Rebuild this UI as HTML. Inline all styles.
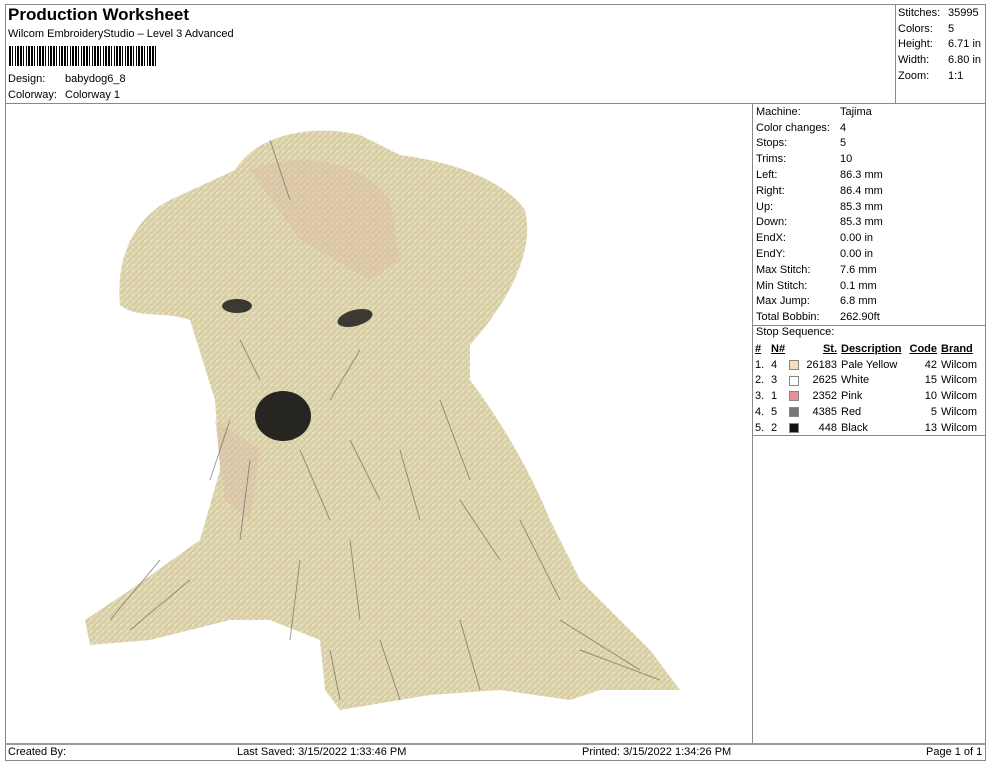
<!DOCTYPE html>
<html><head><meta charset="utf-8"><style>
*{margin:0;padding:0;box-sizing:border-box}
body{width:990px;height:762px;background:#fff;font-family:"Liberation Sans",Arial,sans-serif;color:#000;position:relative;overflow:hidden;font-size:11px}
.a{position:absolute}
.ln{position:absolute;background:#888}
td{font-size:11px;padding:0;white-space:nowrap;height:15.8px}
</style></head><body>
<div class="a" style="left:5px;top:4px;width:981px;height:757px;border:1px solid #888"></div>
<div class="ln" style="left:5px;top:103px;width:981px;height:1px"></div>
<div class="ln" style="left:895px;top:4px;width:1px;height:100px"></div>
<div class="ln" style="left:752px;top:103px;width:1px;height:641px"></div>
<div class="ln" style="left:5px;top:743px;width:981px;height:2px;background:#999"></div>
<div class="a" style="left:8px;top:5px;font-size:17px;font-weight:bold">Production Worksheet</div>
<div class="a" style="left:8px;top:28px">Wilcom EmbroideryStudio – Level 3 Advanced</div>
<div class="a" style="left:9px;top:46px;width:148px;height:20px;background:repeating-linear-gradient(90deg,#000 0 2px,#fff 2px 3px,#000 3px 4px,#fff 4px 6px,#000 6px 7px,#fff 7px 8px,#000 8px 10px,#fff 10px 11px)"></div>
<div class="a" style="left:8px;top:73px">Design:</div><div class="a" style="left:65px;top:73px">babydog6_8</div>
<div class="a" style="left:8px;top:89px">Colorway:</div><div class="a" style="left:65px;top:89px">Colorway 1</div>
<table class="a" style="left:898px;top:5px;border-collapse:collapse">
<tr><td style="width:50px">Stitches:</td><td>35995</td></tr>
<tr><td>Colors:</td><td>5</td></tr>
<tr><td>Height:</td><td>6.71 in</td></tr>
<tr><td>Width:</td><td>6.80 in</td></tr>
<tr><td>Zoom:</td><td>1:1</td></tr></table>
<table class="a" style="left:756px;top:104px;border-collapse:collapse">
<tr><td style="width:84px">Machine:</td><td>Tajima</td></tr>
<tr><td>Color changes:</td><td>4</td></tr>
<tr><td>Stops:</td><td>5</td></tr>
<tr><td>Trims:</td><td>10</td></tr>
<tr><td>Left:</td><td>86.3 mm</td></tr>
<tr><td>Right:</td><td>86.4 mm</td></tr>
<tr><td>Up:</td><td>85.3 mm</td></tr>
<tr><td>Down:</td><td>85.3 mm</td></tr>
<tr><td>EndX:</td><td>0.00 in</td></tr>
<tr><td>EndY:</td><td>0.00 in</td></tr>
<tr><td>Max Stitch:</td><td>7.6 mm</td></tr>
<tr><td>Min Stitch:</td><td>0.1 mm</td></tr>
<tr><td>Max Jump:</td><td>6.8 mm</td></tr>
<tr><td>Total Bobbin:</td><td>262.90ft</td></tr></table>
<div class="ln" style="left:752px;top:325px;width:234px;height:1px"></div>
<div class="ln" style="left:752px;top:435px;width:234px;height:1px"></div>
<div class="a" style="left:756px;top:326px">Stop Sequence:</div>
<table class="a" style="left:755px;top:341px;border-collapse:collapse">
<tr><td style="width:16px;font-weight:bold;text-decoration:underline">#</td><td style="width:18px;font-weight:bold;text-decoration:underline">N#</td><td style="width:14px"></td><td style="width:34px;text-align:right;font-weight:bold;text-decoration:underline">St.</td><td style="width:72px;padding-left:4px;font-weight:bold;text-decoration:underline">Description</td><td style="width:28px;text-align:right;font-weight:bold;text-decoration:underline">Code</td><td style="padding-left:4px;font-weight:bold;text-decoration:underline">Brand</td></tr>
<tr><td>1.</td><td>4</td><td><span style="display:inline-block;width:10px;height:10px;background:#f6dcc0;border:1px solid #888;vertical-align:middle"></span></td><td style="text-align:right">26183</td><td style="padding-left:4px">Pale Yellow</td><td style="text-align:right">42</td><td style="padding-left:4px">Wilcom</td></tr>
<tr><td>2.</td><td>3</td><td><span style="display:inline-block;width:10px;height:10px;background:#fff;border:1px solid #888;vertical-align:middle"></span></td><td style="text-align:right">2625</td><td style="padding-left:4px">White</td><td style="text-align:right">15</td><td style="padding-left:4px">Wilcom</td></tr>
<tr><td>3.</td><td>1</td><td><span style="display:inline-block;width:10px;height:10px;background:#e8909a;border:1px solid #888;vertical-align:middle"></span></td><td style="text-align:right">2352</td><td style="padding-left:4px">Pink</td><td style="text-align:right">10</td><td style="padding-left:4px">Wilcom</td></tr>
<tr><td>4.</td><td>5</td><td><span style="display:inline-block;width:10px;height:10px;background:#777;border:1px solid #888;vertical-align:middle"></span></td><td style="text-align:right">4385</td><td style="padding-left:4px">Red</td><td style="text-align:right">5</td><td style="padding-left:4px">Wilcom</td></tr>
<tr><td>5.</td><td>2</td><td><span style="display:inline-block;width:10px;height:10px;background:#111;border:1px solid #888;vertical-align:middle"></span></td><td style="text-align:right">448</td><td style="padding-left:4px">Black</td><td style="text-align:right">13</td><td style="padding-left:4px">Wilcom</td></tr>
</table>
<svg class="a" style="left:0;top:0" width="752" height="742">
<defs><pattern id="p" width="6" height="6" patternUnits="userSpaceOnUse"><rect width="6" height="6" fill="#e0d7b0"/><path d="M0 6L6 0" stroke="#cfc499" stroke-width="1"/><circle cx="1" cy="1" r="0.8" fill="#f0ecd8"/></pattern></defs>
<path fill="url(#p)" d="M120 305 C115 250 140 215 170 200 L235 170 C260 130 320 125 360 135 L400 155 C440 160 500 175 525 210 C535 250 510 300 470 345 L470 380 C500 420 530 470 550 520 L580 580 L650 650 L680 690 L600 690 L570 700 L500 690 L430 695 L340 710 L325 690 L320 640 L270 620 L230 620 L150 640 L90 645 L85 620 L130 590 L200 540 L220 470 L215 400 L190 320 C160 310 140 320 120 305Z"/>
<path fill="#dcbca4" opacity="0.45" d="M250 170 C300 150 360 160 390 200 L400 260 L370 280 L300 240 Z"/>
<path fill="#dab8a6" opacity="0.4" d="M215 420 L260 450 L250 520 L225 500Z"/>
<g stroke="#5a5e60" stroke-width="1" fill="none" opacity="0.6">
<path d="M230 420 L210 480 M250 460 L240 540 M300 450 L330 520 M350 440 L380 500 M400 450 L420 520 M440 400 L470 480 M460 500 L500 560 M520 520 L560 600 M350 540 L360 620 M300 560 L290 640 M160 560 L110 620 M190 580 L130 630 M560 620 L640 670 M580 650 L660 680 M330 650 L340 700 M380 640 L400 700 M460 620 L480 690 M270 140 L290 200 M240 340 L260 380 M360 350 L330 400"/>
</g>
<ellipse cx="237" cy="306" rx="15" ry="7" fill="#3b3a32"/>
<ellipse cx="355" cy="318" rx="18" ry="8" fill="#3b3a32" transform="rotate(-15 355 318)"/>
<ellipse cx="283" cy="416" rx="28" ry="25" fill="#262522"/>
</svg>
<div class="a" style="left:8px;top:746px">Created By:</div>
<div class="a" style="left:237px;top:746px">Last Saved: 3/15/2022 1:33:46 PM</div>
<div class="a" style="left:582px;top:746px">Printed: 3/15/2022 1:34:26 PM</div>
<div class="a" style="left:926px;top:746px">Page 1 of 1</div>
</body></html>
